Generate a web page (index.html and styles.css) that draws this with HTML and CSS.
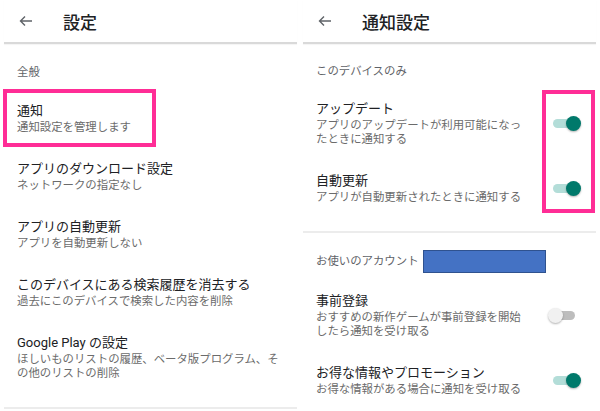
FILE: index.html
```html
<!DOCTYPE html>
<html lang="ja">
<head>
  <meta charset="UTF-8">
  <title>設定</title>
  <link rel="stylesheet" href="styles.css">
</head>
<body>
  <div class="screens">

    <section class="screen">
      <header class="appbar">
        <svg class="back" width="14" height="12" viewBox="0 0 14 12"><path d="M13 6H1.5M6 1.5L1.5 6l4.5 4.5" fill="none" stroke="#5f6368" stroke-width="1.4"/></svg>
        <h1>設定</h1>
      </header>
      <div class="group">
        <p class="group-label">全般</p>
        <div class="item">
          <div class="item-text">
            <p class="item-title">通知</p>
            <p class="item-sub">通知設定を管理します</p>
          </div>
          <span class="mark mark-notify"></span>
        </div>
        <div class="item">
          <div class="item-text">
            <p class="item-title">アプリのダウンロード設定</p>
            <p class="item-sub">ネットワークの指定なし</p>
          </div>
        </div>
        <div class="item">
          <div class="item-text">
            <p class="item-title">アプリの自動更新</p>
            <p class="item-sub">アプリを自動更新しない</p>
          </div>
        </div>
        <div class="item">
          <div class="item-text">
            <p class="item-title">このデバイスにある検索履歴を消去する</p>
            <p class="item-sub">過去にこのデバイスで検索した内容を削除</p>
          </div>
        </div>
        <div class="item">
          <div class="item-text">
            <p class="item-title">Google Play の設定</p>
            <p class="item-sub">ほしいものリストの履歴、ベータ版プログラム、その他のリストの削除</p>
          </div>
        </div>
      </div>
    </section>

    <section class="screen">
      <header class="appbar">
        <svg class="back" width="14" height="12" viewBox="0 0 14 12"><path d="M13 6H1.5M6 1.5L1.5 6l4.5 4.5" fill="none" stroke="#5f6368" stroke-width="1.4"/></svg>
        <h1>通知設定</h1>
      </header>
      <div class="group">
        <p class="group-label tight">このデバイスのみ</p>
        <div class="marked-list">
          <div class="item">
            <div class="item-text narrow">
              <p class="item-title">アップデート</p>
              <p class="item-sub">アプリのアップデートが利用可能になったときに通知する</p>
            </div>
            <span class="switch on"></span>
          </div>
          <div class="item">
            <div class="item-text narrow">
              <p class="item-title">自動更新</p>
              <p class="item-sub">アプリが自動更新されたときに通知する</p>
            </div>
            <span class="switch on"></span>
          </div>
          <span class="mark mark-switches"></span>
        </div>
      </div>
      <div class="group last">
        <p class="group-label">お使いのアカウント<span class="redact"></span></p>
        <div class="item">
          <div class="item-text narrow">
            <p class="item-title">事前登録</p>
            <p class="item-sub">おすすめの新作ゲームが事前登録を開始したら通知を受け取る</p>
          </div>
          <span class="switch"></span>
        </div>
        <div class="item">
          <div class="item-text narrow">
            <p class="item-title">お得な情報やプロモーション</p>
            <p class="item-sub">お得な情報がある場合に通知を受け取る</p>
          </div>
          <span class="switch on"></span>
        </div>
      </div>
    </section>

  </div>
</body>
</html>
```

FILE: styles.css
```css
body {
  margin: 0;
  background: #fff;
  font-family: Roboto, "Noto Sans CJK JP", sans-serif;
  color: #202124;
}

p {
  margin: 0;
}

.screens {
  display: flex;
  gap: 6px;
  padding: 0 4px;
  height: 411px;
  overflow: hidden;
}

.screen {
  width: 293px;
  flex: none;
}

.appbar {
  display: flex;
  align-items: center;
  height: 42px;
  padding-left: 15px;
  border-bottom: 2px solid #d9d9d9;
  box-shadow: 0 1px 1px rgba(0,0,0,0.04);
}

.appbar .back {
  flex: none;
}

.appbar h1 {
  margin: 0 0 0 30px;
  font-size: 17px;
  font-weight: 500;
  color: #202124;
}

.group {
  padding-bottom: 14px;
  border-bottom: 2px solid #ececec;
}

.group.last {
  border-bottom: none;
}

.group-label {
  padding: 20px 13px 9px;
  font-size: 11.4px;
  line-height: 16px;
  color: #5f6368;
}

.group-label.tight {
  padding: 19px 13px 8px;
}

.redact {
  display: inline-block;
  width: 121px;
  height: 21px;
  margin: -4px 0 -3px 4px;
  vertical-align: middle;
  background: #4472c4;
  border: 1px solid #2f528f;
}

.item {
  position: relative;
  display: flex;
  align-items: center;
  justify-content: space-between;
  padding: 14px 15px 13px 13px;
}

.item-text {
  width: 265px;
}

.item-text.narrow {
  width: 212px;
}

.item-title {
  font-size: 13px;
  line-height: 16px;
  color: #202124;
}

.item-sub {
  margin-top: 1px;
  font-size: 11.4px;
  line-height: 14px;
  color: #6b6b6b;
}

.marked-list {
  position: relative;
}

/* pink annotation frames */
.mark {
  position: absolute;
  border: 4px solid #ff2d96;
  box-sizing: border-box;
}

.mark-notify {
  left: -1px;
  top: 0;
  width: 153px;
  height: 58px;
}

.mark-switches {
  left: 239px;
  top: 3px;
  width: 53px;
  height: 123px;
}

.switch {
  position: relative;
  flex: none;
  width: 33px;
  height: 15px;
}

.switch::before {
  content: "";
  position: absolute;
  left: 5px;
  right: 6px;
  top: 3px;
  height: 9px;
  border-radius: 5px;
  background: #bdbdbd;
}

.switch::after {
  content: "";
  position: absolute;
  left: 0;
  top: 0;
  width: 15px;
  height: 15px;
  border-radius: 50%;
  background: #f1f1f1;
  box-shadow: 0 1px 2px rgba(0,0,0,0.3);
}

.switch.on::before {
  background: #b3ddd8;
}

.switch.on::after {
  left: auto;
  right: 0;
  background: #00796b;
}
```
